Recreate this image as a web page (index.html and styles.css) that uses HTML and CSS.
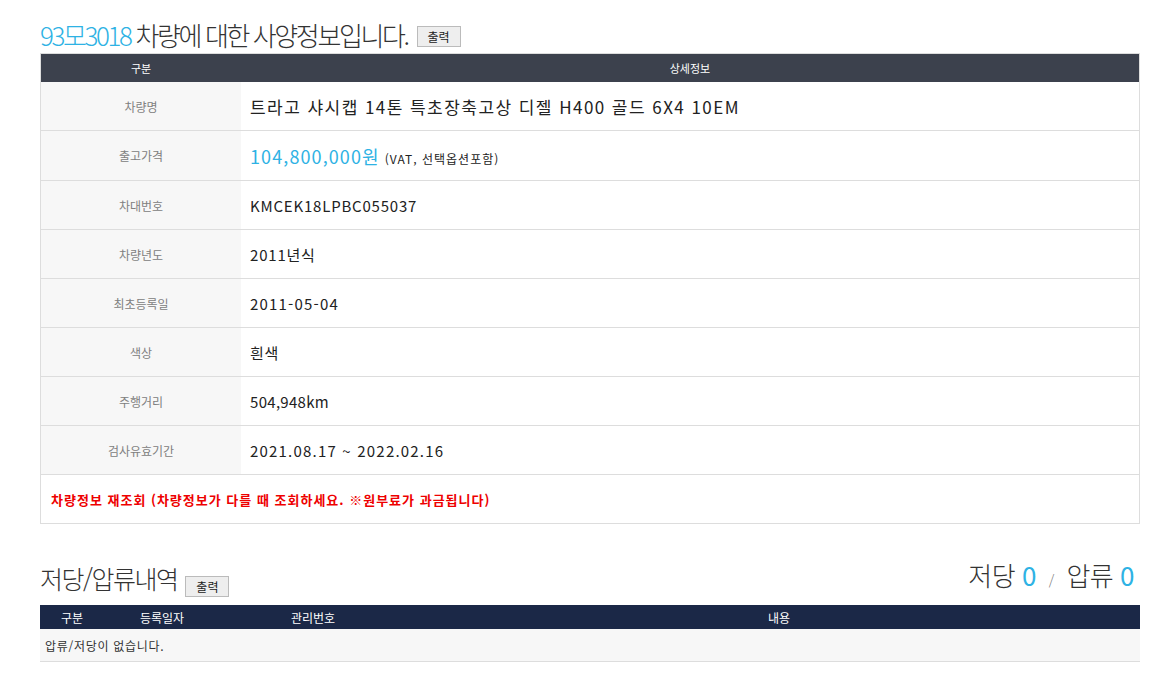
FILE: index.html
```html
<!DOCTYPE html>
<html lang="ko">
<head>
<meta charset="utf-8">
<link rel="stylesheet" href="styles.css">
</head>
<body>
<div class="page">
  <div class="title-row">
    <h1 class="title"><span class="blue">93모3018</span> 차량에 대한 사양정보입니다.</h1>
    <button class="btn">출력</button>
  </div>
  <table class="spec">
    <thead>
      <tr><th class="c-label">구분</th><th>상세정보</th></tr>
    </thead>
    <tbody>
      <tr><td class="label">차량명</td><td class="val name">트라고 샤시캡 14톤 특초장축고상 디젤 H400 골드 6X4 10EM</td></tr>
      <tr><td class="label">출고가격</td><td class="val"><span class="price">104,800,000원</span> <span class="small">(VAT, 선택옵션포함)</span></td></tr>
      <tr><td class="label">차대번호</td><td class="val">KMCEK18LPBC055037</td></tr>
      <tr><td class="label">차량년도</td><td class="val">2011년식</td></tr>
      <tr><td class="label">최초등록일</td><td class="val wide">2011-05-04</td></tr>
      <tr><td class="label">색상</td><td class="val">흰색</td></tr>
      <tr><td class="label">주행거리</td><td class="val tight">504,948km</td></tr>
      <tr><td class="label">검사유효기간</td><td class="val wide">2021.08.17 ~ 2022.02.16</td></tr>
      <tr><td class="notice" colspan="2">차량정보 재조회 (차량정보가 다를 때 조회하세요. ※원부료가 과금됩니다)</td></tr>
    </tbody>
  </table>

  <div class="sec2-head">
    <div class="title-row2">
      <h2 class="title2">저당/압류내역</h2>
      <button class="btn">출력</button>
    </div>
    <div class="counts">저당 <span class="blue">0</span> <span class="slash">/</span> 압류 <span class="blue">0</span></div>
  </div>
  <table class="lien">
    <thead>
      <tr><th class="w1">구분</th><th class="w2">등록일자</th><th class="w3">관리번호</th><th class="w4">내용</th></tr>
    </thead>
    <tbody>
      <tr><td colspan="4" class="empty">압류/저당이 없습니다.</td></tr>
    </tbody>
  </table>
</div>
</body>
</html>
```
FILE: styles.css
```css
html, body { margin: 0; padding: 0; background: #fff; }
body { font-family: "Noto Sans CJK KR", "Noto Sans", sans-serif; color: #222; }
.page { padding: 13px 37px 0 40px; width: 1099px; }
.title-row { display: flex; align-items: flex-end; gap: 9px; height: 40px; }
.title { margin: 0; font-size: 26px; font-weight: 300; color: #333; letter-spacing: -2.4px; line-height: 36px; }
.blue { color: #2eb2e4; }
.btn { font-family: inherit; font-size: 12px; color: #222; background: #eee; border: 1px solid #bbb; width: 44px; height: 21px; padding: 0; margin-bottom: 6px; line-height: 19px; }
.spec { width: 1100px; border-collapse: collapse; border: 1px solid #ddd; }
.spec th { background: #3c414d; color: #fff; font-weight: 400; font-size: 11px; height: 28px; padding: 0; }
.spec th.c-label { width: 200px; }
.spec td { border-bottom: 1px solid #ddd; height: 48px; padding: 0; }
.spec tbody tr:nth-child(2) td { height: 49px; }
.spec td.label { background: #f7f7f7; color: #808080; font-size: 12px; text-align: center; width: 200px; }
.spec td.val { font-size: 15px; color: #222; padding-left: 9px; letter-spacing: 0.8px; }
.spec td.val.name { font-size: 17px; letter-spacing: 1.45px; }
.spec td.val.wide { letter-spacing: 1.2px; }
.spec td.val.tight { letter-spacing: 0.3px; }
.price { color: #2eb2e4; font-size: 18px; letter-spacing: 1.1px; }
.small { font-size: 12px; color: #222; letter-spacing: 1px; }
.spec td.notice { color: #e00; font-weight: 700; font-size: 13px; letter-spacing: 1px; padding-left: 10px; }
.sec2-head { display: flex; justify-content: space-between; align-items: flex-end; margin-top: 31px; height: 45px; }
.title-row2 { display: flex; align-items: flex-end; gap: 8px; }
.title2 { margin: 0; font-size: 25px; font-weight: 300; color: #333; letter-spacing: -1.5px; line-height: 34px; margin-bottom: 5px; }
.title-row2 .btn { margin-bottom: 3px; }
.counts { font-size: 26px; font-weight: 300; color: #333; line-height: 34px; margin-bottom: 3px; margin-right: 5px; letter-spacing: -0.5px; }
.counts .blue { font-weight: 400; }
.slash { font-size: 14px; color: #777; margin: 0 6px; }
.lien { width: 1100px; border-collapse: collapse; margin-top: 5px; }
.lien th { background: #1b2847; color: #fff; font-weight: 400; font-size: 12px; height: 24px; padding: 0; }
.lien th.w1 { width: 64px; }
.lien th.w2 { width: 116px; }
.lien th.w3 { width: 186px; }
.lien th.w4 { padding-left: 12px; }
.lien td.empty { background: #f7f7f7; font-size: 12px; color: #333; height: 32px; padding: 0 0 0 5px; letter-spacing: 0.7px; border-bottom: 1px solid #ddd; }
```
